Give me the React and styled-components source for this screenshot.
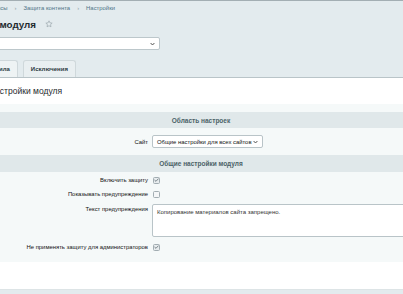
import React from "react";
import styled, { createGlobalStyle } from "styled-components";

const Global = createGlobalStyle`
  html, body { margin: 0; padding: 0; background: #e3ebee; overflow: hidden; }
  body { font-family: "Liberation Sans", Arial, sans-serif; }
  * { box-sizing: border-box; }
`;

const Page = styled.div`
  width: 403px;
  height: 294px;
  border-top: 1px solid #a3aeb3;
  overflow: hidden;
`;

const Breadcrumb = styled.div`
  margin: 3px 0 0 -17px;
  height: 8px;
  line-height: 8px;
  font-size: 5.9px;
  color: #4f7487;
  white-space: nowrap;
  display: flex;
  gap: 7px;
`;

const Sep = styled.span`
  color: #8a9ca4;
`;

const TitleRow = styled.div`
  margin: 5px 0 0 -55px;
  height: 14px;
  display: flex;
  align-items: center;
  gap: 9px;
  white-space: nowrap;
`;

const Title = styled.h1`
  margin: 0;
  font-size: 9.8px;
  font-weight: bold;
  color: #1f2a2e;
`;

const TopSelect = styled.div`
  margin: 6px 0 0 -22px;
  width: 182px;
  height: 13px;
  background: #fff;
  border: 1px solid #bcc7cb;
  border-radius: 2px;
  display: flex;
  align-items: center;
  justify-content: flex-end;
  padding-right: 4px;
`;

const Arrow = styled.svg`
  width: 5px;
  height: 4px;
  display: block;
`;

const TabBar = styled.div`
  margin: 10px 0 0 -24px;
  width: 448px;
  height: 18px;
  display: flex;
  align-items: flex-end;
  gap: 5px;
  border-bottom: 1px solid #b9c4c8;
`;

const Tab = styled.div`
  height: 17px;
  padding: 0 7px;
  display: flex;
  align-items: center;
  font-size: 6px;
  font-weight: bold;
  color: #2c393e;
  background: ${p => (p.$active ? "#eef3f4" : "#e9eff1")};
  border: 1px solid #cfd8db;
  border-bottom: none;
  border-radius: 3px 3px 0 0;
  white-space: nowrap;
`;

const Detail = styled.div`
  margin-left: -22px;
  width: 446px;
`;

const DetailTitle = styled.div`
  height: 26px;
  background: #fff;
  padding-left: 11px;
  display: flex;
  align-items: center;
  font-size: 8.5px;
  color: #1f2a2e;
  white-space: nowrap;
`;

const Content = styled.div`
  background: #f5f9f9;
  padding: 8px 0 8px;
`;

const Heading = styled.div`
  height: ${p => p.$h}px;
  background: #e0e8ea;
  display: flex;
  align-items: center;
  justify-content: center;
  font-size: 6.5px;
  font-weight: bold;
  color: #4b6267;
`;

const Row = styled.div`
  display: grid;
  grid-template-columns: 174px 1fr;
  align-items: ${p => (p.$top ? "start" : "center")};
  padding: ${p => p.$pad || 3}px 0;
`;

const Label = styled.div`
  text-align: right;
  padding-right: 4px;
  font-size: 5.9px;
  line-height: 8px;
  color: #111;
  white-space: nowrap;
`;

const Value = styled.div`
  display: flex;
  align-items: center;
  min-height: 8px;
`;

const SiteSelect = styled.div`
  width: 111px;
  height: 13px;
  background: #fff;
  border: 1px solid #b9c4c8;
  border-radius: 2px;
  display: flex;
  align-items: center;
  justify-content: space-between;
  padding: 0 4px 0 4px;
  font-size: 5.9px;
  color: #111;
  white-space: nowrap;
`;

const Box = styled.span`
  width: 7px;
  height: 7px;
  margin-left: 1px;
  border: 1px solid #a2adb2;
  border-radius: 1.5px;
  background: ${p => (p.$checked ? "#e7ecee" : "#f4f6f7")};
  display: inline-flex;
  align-items: center;
  justify-content: center;
`;

const TextArea = styled.div`
  width: 280px;
  height: 33px;
  background: #fff;
  border: 1px solid #b9c4c8;
  border-radius: 2px;
  padding: 3px 4px;
  font-size: 6px;
  line-height: 8px;
  color: #333;
  white-space: nowrap;
`;

const Buttons = styled.div`
  height: 28px;
  background: #fff;
  border-bottom: 1px solid #dde4e6;
`;

function Check({ checked }) {
  return (
    <Box $checked={checked}>
      {checked && (
        <svg width="5" height="4" viewBox="0 0 5 4">
          <path d="M0.5 2 L2 3.3 L4.5 0.6" fill="none" stroke="#6e7b80" strokeWidth="0.9" />
        </svg>
      )}
    </Box>
  );
}

function Chevron() {
  return (
    <Arrow viewBox="0 0 5 4">
      <path d="M0.6 1 L2.5 3 L4.4 1" fill="none" stroke="#444" strokeWidth="0.9" />
    </Arrow>
  );
}

export default function App() {
  return (
    <Page>
      <Global />
      <Breadcrumb>
        <span>Сервисы</span>
        <Sep>›</Sep>
        <span>Защита контента</span>
        <Sep>›</Sep>
        <span>Настройки</span>
      </Breadcrumb>
      <TitleRow>
        <Title>Настройки модуля</Title>
        <svg width="8" height="8" viewBox="0 0 24 24">
          <path
            d="M12 2.5 L14.9 8.6 L21.5 9.4 L16.6 13.9 L17.9 20.5 L12 17.2 L6.1 20.5 L7.4 13.9 L2.5 9.4 L9.1 8.6 Z"
            fill="none"
            stroke="#98a5aa"
            strokeWidth="2"
            strokeLinejoin="round"
          />
        </svg>
      </TitleRow>
      <TopSelect>
        <Chevron />
      </TopSelect>
      <TabBar>
        <Tab $active>Правила</Tab>
        <Tab>Исключения</Tab>
      </TabBar>
      <Detail>
        <DetailTitle>Настройки модуля</DetailTitle>
        <Content>
          <Heading $h={16}>Область настроек</Heading>
          <Row $pad={7}>
            <Label>Сайт</Label>
            <Value>
              <SiteSelect>
                <span>Общие настройки для всех сайтов</span>
                <Chevron />
              </SiteSelect>
            </Value>
          </Row>
          <Heading $h={17}>Общие настройки модуля</Heading>
          <Row style={{ paddingTop: 4 }}>
            <Label>Включить защиту</Label>
            <Value><Check checked /></Value>
          </Row>
          <Row>
            <Label>Показывать предупреждение</Label>
            <Value><Check /></Value>
          </Row>
          <Row $top>
            <Label style={{ paddingTop: 1 }}>Текст предупреждения</Label>
            <Value>
              <TextArea>Копирование материалов сайта запрещено.</TextArea>
            </Value>
          </Row>
          <Row>
            <Label>Не применять защиту для администраторов</Label>
            <Value><Check checked /></Value>
          </Row>
        </Content>
        <Buttons />
      </Detail>
    </Page>
  );
}
